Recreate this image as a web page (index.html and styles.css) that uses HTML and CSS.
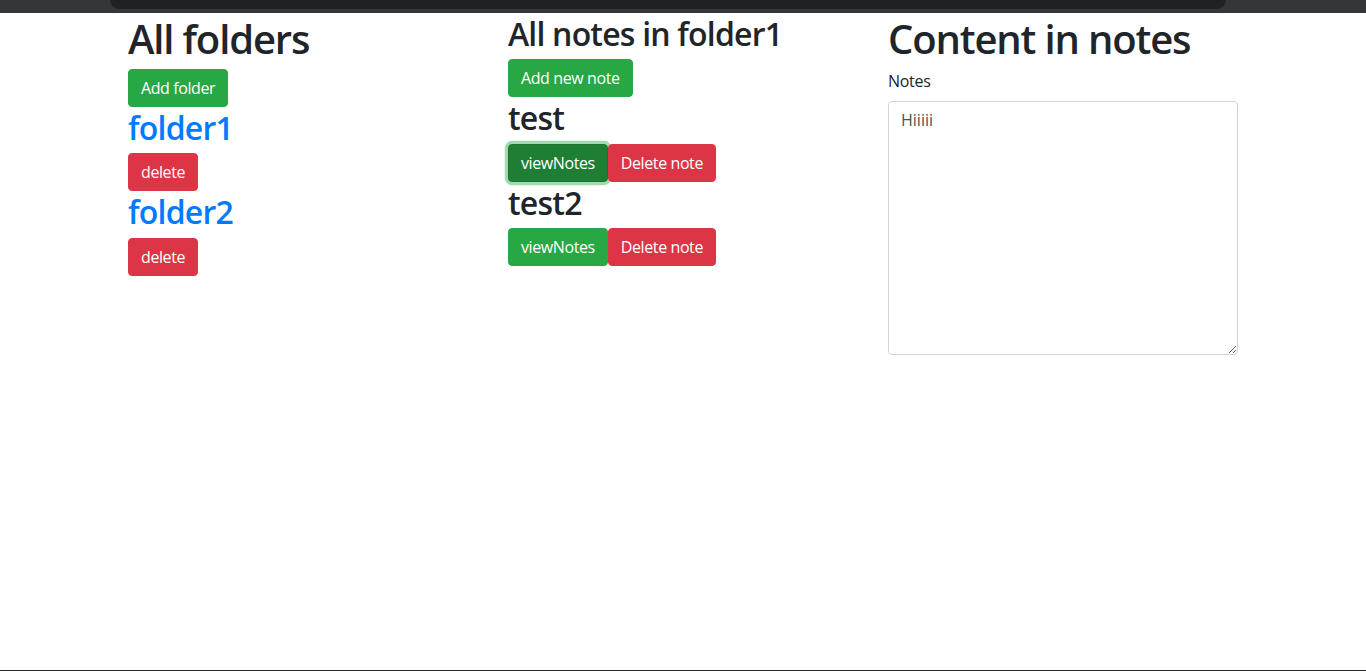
FILE: index.html
```html
<!DOCTYPE html>
<html lang="en">
<head>
<meta charset="utf-8">
<title>Notes</title>
<link rel="stylesheet" href="styles.css">
</head>
<body>
<div class="chrome"><div class="chrome-bar"></div></div>
<main class="container">
  <div class="row">
    <section class="col">
      <h1 class="h1">All folders</h1>
      <button class="btn btn-success">Add folder</button>
      <h2 class="h2"><a class="link" href="#">folder1</a></h2>
      <button class="btn btn-danger">delete</button>
      <h2 class="h2"><a class="link" href="#">folder2</a></h2>
      <button class="btn btn-danger">delete</button>
    </section>
    <section class="col">
      <h2 class="h2">All notes in folder1</h2>
      <button class="btn btn-success">Add new note</button>
      <h2 class="h2">test</h2>
      <div class="btn-row">
        <button class="btn btn-success active-focus">viewNotes</button><button class="btn btn-danger">Delete note</button>
      </div>
      <h2 class="h2">test2</h2>
      <div class="btn-row">
        <button class="btn btn-success">viewNotes</button><button class="btn btn-danger">Delete note</button>
      </div>
    </section>
    <section class="col">
      <h1 class="h1">Content in notes</h1>
      <label class="label" for="notes">Notes</label>
      <textarea id="notes" class="form-control" rows="10">Hiiiii</textarea>
    </section>
  </div>
</main>
<div class="bottom-line"></div>
</body>
</html>
```
FILE: styles.css
```css
* { box-sizing: border-box; }
html, body { margin: 0; padding: 0; }
body {
  font-family: "Open Sans", "Noto Sans", sans-serif;
  font-size: 16px;
  line-height: 1.5;
  color: #212529;
  background: #fff;
  min-height: 100vh;
  display: flex;
  flex-direction: column;
}
.chrome {
  height: 13px;
  background: #35363a;
  display: flex;
  justify-content: center;
}
.chrome-bar {
  margin-left: 110px;
  margin-right: 140px;
  flex: 1;
  height: 9px;
  background: #202124;
  border-radius: 0 0 12px 12px;
}
.container {
  width: 1140px;
  margin: 0 auto;
  padding: 0 15px;
  flex: 1;
}
.row { display: flex; margin: 0 -15px; }
.col { width: 380px; padding: 0 15px; display: flex; flex-direction: column; align-items: flex-start; }
.h1, .h2 { margin: 0 0 6px; padding-top: 2px; font-weight: 600; line-height: 1.2; }
.h1 { font-size: 40px; letter-spacing: -1.15px; }
.h2 { font-size: 32px; letter-spacing: -0.8px; }
.link { color: #007bff; text-decoration: none; }
.btn {
  font-family: inherit;
  font-size: 16px;
  line-height: 1.5;
  padding: 6px 12px;
  border: 1px solid transparent;
  border-radius: 4px;
  color: #fff;
  cursor: pointer;
  font-weight: 400;
  letter-spacing: -0.4px;
}
.btn-success { background: #28a745; border-color: #28a745; }
.btn-danger { background: #dc3545; border-color: #dc3545; }
.active-focus { background: #1e7e34; border-color: #1c7430; box-shadow: 0 0 0 3.2px rgba(72,180,97,.5); }
.btn-row { display: flex; }
.label { display: inline-block; margin-bottom: 8px; letter-spacing: -0.3px; }
.form-control {
  display: block;
  width: 100%;
  font-family: inherit;
  font-size: 16px;
  line-height: 1.5;
  padding: 6px 12px;
  color: #495057;
  border: 1px solid #ced4da;
  border-radius: 4px;
  background: #fff;
}
.bottom-line { height: 1px; background: #2a2a2a; }
```
